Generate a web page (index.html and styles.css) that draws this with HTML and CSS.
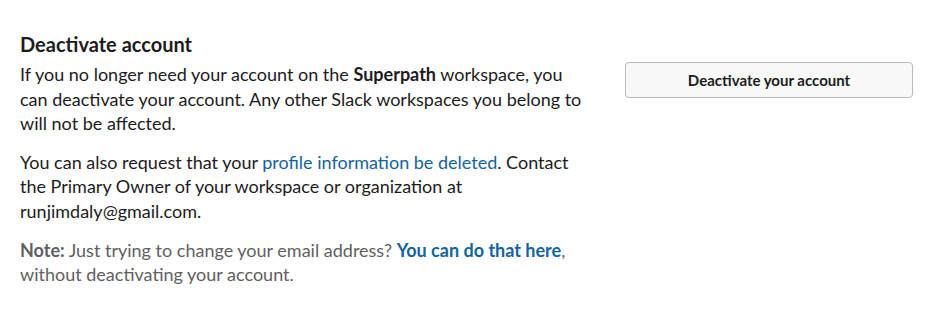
FILE: index.html
```html
<!DOCTYPE html>
<html>
<head>
<meta charset="utf-8">
<link rel="stylesheet" href="styles.css">
</head>
<body>
<section class="panel">
  <h2 class="title">Deactivate account</h2>
  <div class="row">
    <div class="content">
      <p class="para">If you no longer need your account on the <strong>Superpath</strong> workspace, you can deactivate your account. Any other Slack workspaces you belong to will not be affected.</p>
      <p class="para">You can also request that your <a class="link" href="#">profile information be deleted</a>. Contact the Primary Owner of your workspace or organization at runjimdaly@gmail.com.</p>
      <p class="para note"><strong>Note:</strong> Just trying to change your email address? <a class="link strong-link" href="#">You can do that here</a>, without deactivating your account.</p>
    </div>
    <div class="actions">
      <button class="btn" type="button">Deactivate your account</button>
    </div>
  </div>
</section>
</body>
</html>
```

FILE: styles.css
```css
html, body {
  margin: 0;
  padding: 0;
  background: #ffffff;
}
body {
  font-family: Lato, "Noto Sans", sans-serif;
  color: #1d1c1d;
  -webkit-font-smoothing: antialiased;
}
.panel {
  padding: 32px 31px 0 20px;
}
.title {
  margin: 0;
  font-size: 20px;
  line-height: 25px;
  font-weight: 700;
}
.row {
  display: flex;
  align-items: flex-start;
  margin-top: 5px;
}
.content {
  width: 566px;
}
.para {
  margin: 0 0 14px 0;
  font-size: 18px;
  line-height: 24.6px;
}
.para strong {
  font-weight: 700;
}
.link {
  color: #1264a3;
  text-decoration: none;
}
.strong-link {
  font-weight: 700;
}
.note {
  color: #616061;
}
.actions {
  margin-left: 39px;
  flex: 1;
}
.btn {
  display: block;
  width: 288px;
  height: 36px;
  padding: 0 16px;
  border: 1px solid #bbbbbb;
  border-radius: 4px;
  background: #f8f8f8;
  color: #1d1c1d;
  font-family: Lato, "Noto Sans", sans-serif;
  font-size: 15px;
  font-weight: 700;
  cursor: pointer;
}
```
